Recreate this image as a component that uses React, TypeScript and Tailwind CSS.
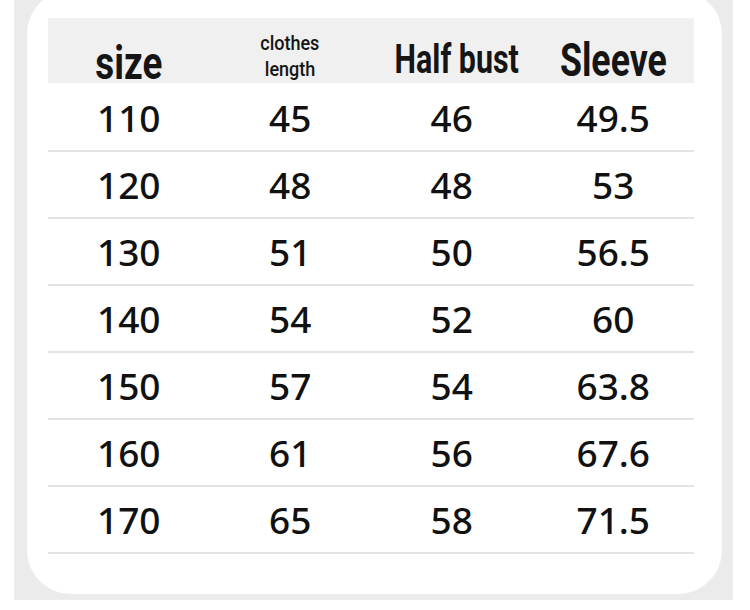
const rows = [
  ["110", "45", "46", "49.5"],
  ["120", "48", "48", "53"],
  ["130", "51", "50", "56.5"],
  ["140", "54", "52", "60"],
  ["150", "57", "54", "63.8"],
  ["160", "61", "56", "67.6"],
  ["170", "65", "58", "71.5"],
];

export default function App() {
  return (
    <div className="w-[750px] h-[610px] bg-white pl-[14px] pr-[17px] overflow-hidden">
      <div className="h-full bg-[#ebebec] pl-[13px] pr-[11px] pb-[16px]">
        <div className="-mt-[10px] h-[604px] bg-white rounded-[44px] pl-[21px] pr-[28px] pt-[28px]">
          {/* header band */}
          <div className="grid grid-cols-4 h-[65px] bg-[#f0f0f0] text-[#151515] font-['Roboto',sans-serif] font-bold">
            <div className="flex justify-center items-end">
              <span className="inline-block text-[46px] leading-none scale-x-[0.8] -mb-[3px]">size</span>
            </div>
            <div className="flex flex-col items-center pt-[12px]">
              <span className="inline-block text-[20px] leading-[26px] font-medium scale-x-[0.9]">clothes</span>
              <span className="inline-block text-[20px] leading-[26px] font-medium scale-x-[0.9]">length</span>
            </div>
            <div className="flex justify-center items-end pb-[3px] pl-[10px]">
              <span className="inline-block text-[40px] leading-none scale-x-[0.76] whitespace-nowrap">Half bust</span>
            </div>
            <div className="flex justify-center items-end">
              <span className="inline-block text-[47px] leading-none scale-x-[0.76]">Sleeve</span>
            </div>
          </div>
          <div className="pt-[2px]">
            {rows.map((r) => (
              <div
                key={r[0]}
                className="grid grid-cols-4 h-[67px] border-b-2 border-[#e4e4e4] items-center font-['Noto_Sans',sans-serif] font-medium text-[37px] text-[#111]"
              >
                {r.map((v, i) => (
                  <div key={i} className="text-center leading-none">
                    {v}
                  </div>
                ))}
              </div>
            ))}
          </div>
        </div>
      </div>
    </div>
  );
}
